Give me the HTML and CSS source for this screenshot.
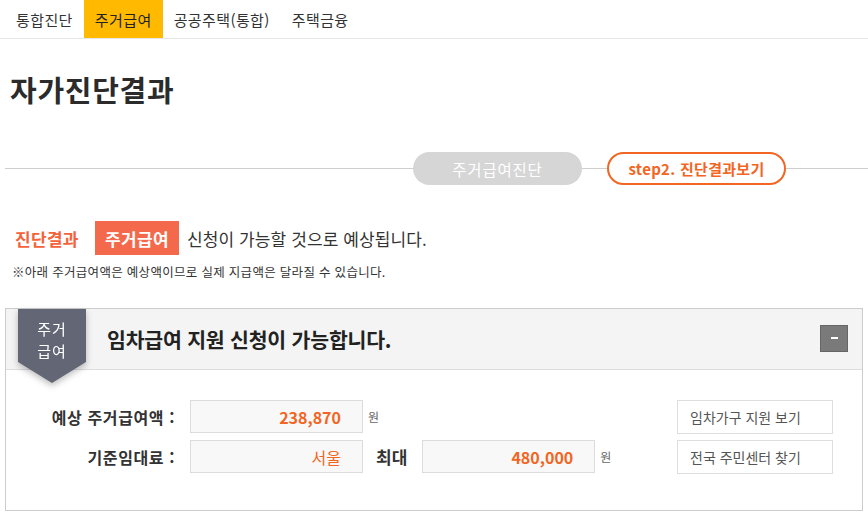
FILE: index.html
```html
<!DOCTYPE html>
<html lang="ko">
<head>
<meta charset="utf-8">
<title>자가진단결과</title>
<link rel="stylesheet" href="styles.css">
</head>
<body>
<nav class="gnb">
  <a class="tab">통합진단</a>
  <a class="tab active">주거급여</a>
  <a class="tab">공공주택(통합)</a>
  <a class="tab">주택금융</a>
</nav>

<h1 class="page-title">자가진단결과</h1>

<div class="steps">
  <span class="step done">주거급여진단</span>
  <span class="step current">step2. 진단결과보기</span>
</div>

<div class="result-line">
  <span class="result-label">진단결과</span>
  <span class="result-badge">주거급여</span>
  <span class="result-text">신청이 가능할 것으로 예상됩니다.</span>
</div>
<p class="note">※아래 주거급여액은 예상액이므로 실제 지급액은 달라질 수 있습니다.</p>

<section class="panel">
  <header class="panel-head">
    <div class="ribbon-wrap">
      <div class="ribbon"><span class="ribbon-line">주거</span><span class="ribbon-line">급여</span></div>
    </div>
    <h2 class="panel-title">임차급여 지원 신청이 가능합니다.</h2>
    <button class="toggle" type="button"><span class="minus"></span></button>
  </header>
  <div class="panel-body">
    <div class="fields">
      <div class="row">
        <span class="label">예상 주거급여액 :</span>
        <span class="value bold">238,870</span>
        <span class="unit">원</span>
      </div>
      <div class="row">
        <span class="label">기준임대료 :</span>
        <span class="value">서울</span>
        <span class="max">최대</span>
        <span class="value bold">480,000</span>
        <span class="unit">원</span>
      </div>
    </div>
    <div class="links">
      <a class="link-btn">임차가구 지원 보기</a>
      <a class="link-btn">전국 주민센터 찾기</a>
    </div>
  </div>
</section>
</body>
</html>
```

FILE: styles.css
```css
* { box-sizing: border-box; }
html, body { margin: 0; padding: 0; background: #fff; }
body {
  font-family: "Noto Sans CJK KR", "Noto Sans", sans-serif;
  color: #333;
  width: 868px;
  overflow: hidden;
}

.gnb {
  display: flex;
  height: 39px;
  padding-left: 5px;
  border-bottom: 1px solid #e6e6e6;
}
.tab {
  display: flex;
  align-items: center;
  padding: 0 11px;
  font-size: 15px;
  color: #333;
  letter-spacing: 0.4px;
}
.tab.active { background: #ffba00; color: #222; }

.page-title {
  margin: 30px 0 0 10px;
  font-size: 29px;
  line-height: 40px;
  font-weight: 700;
  color: #2b2b2b;
  letter-spacing: 0.7px;
}

.steps {
  margin: 43px 0 0 5px;
  display: flex;
  justify-content: flex-end;
  gap: 25px;
  padding-right: 82px;
  background: linear-gradient(#cfcfcf, #cfcfcf) no-repeat 0 16px / 100% 1px;
}
.step {
  height: 33px;
  display: flex;
  align-items: center;
  justify-content: center;
  border-radius: 17px;
  font-size: 15.5px;
}
.step.done {
  width: 169px;
  background: #d6d6d6;
  color: #fff;
  letter-spacing: 0.8px;
}
.step.current {
  width: 179px;
  background: #fff;
  border: 2px solid #f26522;
  color: #f26522;
  font-weight: 700;
  font-size: 15px;
  letter-spacing: 0.3px;
}

.result-line {
  margin: 36px 0 0 15px;
  display: flex;
  align-items: center;
  height: 34px;
}
.result-label {
  color: #f4623a;
  font-weight: 700;
  font-size: 17px;
  letter-spacing: 0.3px;
  width: 80px;
}
.result-badge {
  height: 34px;
  width: 84px;
  display: flex;
  align-items: center;
  justify-content: center;
  background: #f4694b;
  color: #fff;
  font-weight: 700;
  font-size: 17px;
  letter-spacing: 0.3px;
}
.result-text {
  margin-left: 8px;
  font-size: 17px;
  color: #333;
  letter-spacing: 0.1px;
}
.note {
  margin: 8px 0 0 12px;
  font-size: 12.5px;
  line-height: 18px;
  letter-spacing: 0.3px;
  color: #333;
}

.panel {
  margin: 27px 0 0 5px;
  width: 858px;
  border: 1px solid #cccccc;
  height: 203px;
}
.panel-head {
  height: 61px;
  background: #f4f4f4;
  border-bottom: 1px solid #dddddd;
  display: flex;
  align-items: center;
  padding: 0 14px 0 12px;
}
.ribbon-wrap {
  align-self: flex-start;
  width: 68px;
  height: 74px;
  flex: none;
  filter: drop-shadow(0 3px 3px rgba(0,0,0,0.25));
  position: relative;
  z-index: 1;
}
.ribbon {
  width: 68px;
  height: 74px;
  background: #636775;
  clip-path: polygon(0 0, 100% 0, 100% 53px, 50% 100%, 0 53px);
  color: #fff;
  font-size: 15px;
  letter-spacing: 1px;
  text-align: center;
  padding-top: 9px;
  display: flex;
  flex-direction: column;
  align-items: center;
}
.ribbon-line {
  display: block;
  height: 22px;
  line-height: 22px;
}
.panel-title {
  margin: 0 0 0 21px;
  font-size: 20.5px;
  font-weight: 700;
  color: #222;
  letter-spacing: -0.2px;
  flex: 1;
}
.toggle {
  width: 28px;
  height: 27px;
  background: #7a7a7a;
  border: 1px solid #666;
  padding: 0;
  display: flex;
  align-items: center;
  justify-content: center;
  margin-top: -2px;
}
.minus {
  display: block;
  width: 7px;
  height: 2px;
  background: #fff;
}

.panel-body {
  display: flex;
  padding: 30px 29px 0 0;
}
.fields {
  display: flex;
  flex-direction: column;
  gap: 7px;
}
.row {
  display: flex;
  align-items: center;
  height: 33px;
}
.label {
  width: 169px;
  text-align: right;
  font-size: 16px;
  font-weight: 700;
  color: #333;
  letter-spacing: 0.6px;
  margin-right: 15px;
}
.value {
  width: 173px;
  height: 33px;
  background: #f8f8f8;
  border: 1px solid #dcdcdc;
  display: flex;
  align-items: center;
  justify-content: flex-end;
  padding-right: 21px;
  color: #f26522;
  font-size: 16px;
}
.value.bold { font-weight: 700; }
.unit {
  margin-left: 5px;
  font-size: 12px;
  color: #666;
}
.max {
  margin: 0 15px 0 13px;
  font-size: 17px;
  font-weight: 700;
  color: #333;
}
.links {
  margin-left: auto;
  display: flex;
  flex-direction: column;
  gap: 6px;
}
.link-btn {
  width: 156px;
  height: 34px;
  border: 1px solid #dedede;
  display: flex;
  align-items: center;
  padding-left: 12px;
  font-size: 14px;
  color: #555;
  background: #fff;
}
```
